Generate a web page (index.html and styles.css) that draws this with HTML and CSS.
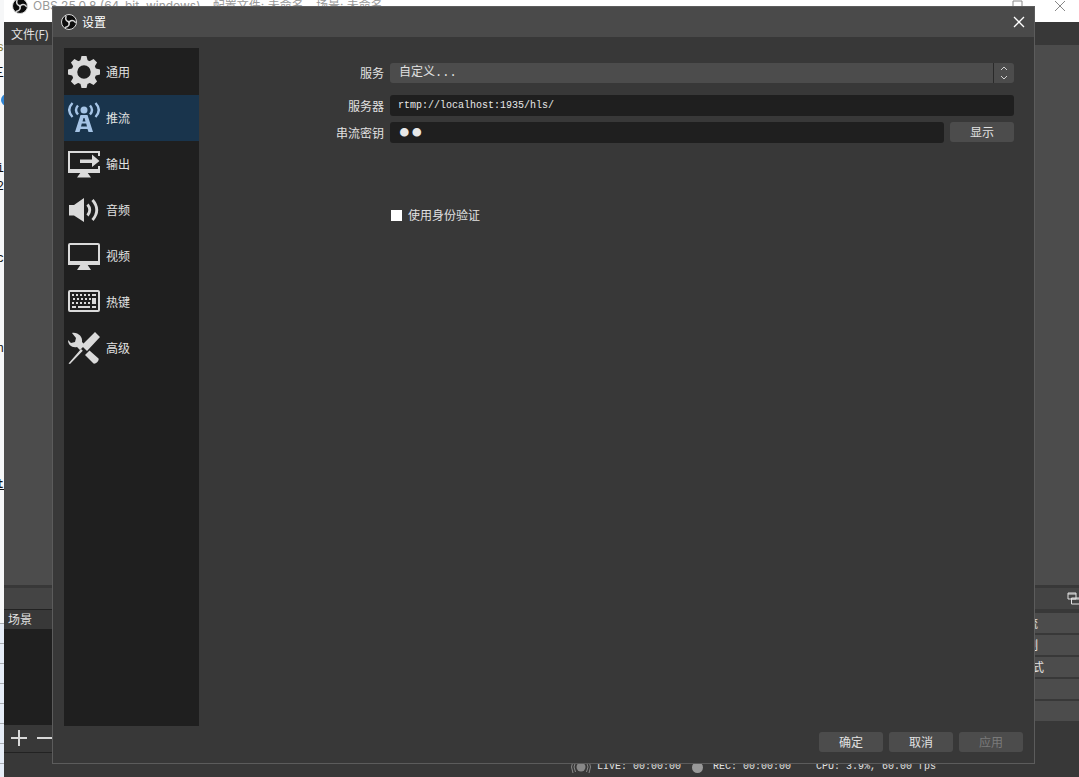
FILE: index.html
```html
<!DOCTYPE html>
<html lang="zh-CN">
<head>
<meta charset="utf-8">
<title>OBS 设置</title>
<link rel="stylesheet" href="styles.css">
</head>
<body>
<svg class="defs" aria-hidden="true">
  <symbol id="obs" viewBox="0 0 32 32">
    <circle cx="16" cy="16" r="15" fill="#0c0c0c" stroke="#d8d8d8" stroke-width="2"/>
    <g fill="none" stroke="#d8d8d8" stroke-width="3" stroke-linecap="round">
      <path d="M10 5c-2 6 1 10 7 11"/>
      <path d="M10 5c-2 6 1 10 7 11" transform="rotate(120 16 16)"/>
      <path d="M10 5c-2 6 1 10 7 11" transform="rotate(240 16 16)"/>
    </g>
  </symbol>
</svg>
<div class="desktop">
  <div class="editor-strip" aria-hidden="true">
    <span class="frag f-line">s</span>
    <span class="frag f-mark">三</span>
    <span class="frag f-dot"></span>
    <span class="frag f-i">i</span>
    <span class="frag f-2">2</span>
    <span class="frag f-c">c</span>
    <span class="frag f-n">n</span>
    <span class="frag f-t">t</span>
    <span class="editor-rows"></span>
  </div>
  <div class="window">
    <header class="window-title">
      <svg class="window-logo"><use href="#obs"/></svg>
      <span class="window-name">OBS 25.0.8 (64-bit, windows) - 配置文件: 未命名 - 场景: 未命名</span>
      <button class="win-btn" aria-label="最大化"><svg viewBox="0 0 12 12"><path d="M1 1h9v9H1z"/></svg></button>
      <button class="win-btn" aria-label="关闭窗口"><svg viewBox="0 0 12 12"><path d="M1 1l10 10M11 1L1 11"/></svg></button>
    </header>
    <nav class="menubar"><button class="menu">文件(F)</button></nav>
    <main class="preview"></main>
    <div class="docks">
      <section class="dock scenes">
        <div class="dock-head"></div>
        <h2 class="dock-title">场景</h2>
        <div class="dock-list"></div>
        <div class="dock-tools">
          <button aria-label="添加场景"><svg viewBox="0 0 16 16"><path d="M8 0v16M0 8h16"/></svg></button>
          <button aria-label="移除场景"><svg viewBox="0 0 16 16"><path d="M0 8h16"/></svg></button>
        </div>
      </section>
      <section class="dock controls">
        <div class="dock-head"><svg viewBox="0 0 12 13"><path d="M1 1h8v6H1zM4.500 6h9v6h-9z"/><path d="M1 2h8M4.500 7h9"/></svg></div>
        <div class="control-list">
          <button>开始推流</button>
          <button>开始录制</button>
          <button>工作室模式</button>
          <button aria-label="设置"></button>
          <button aria-label="退出"></button>
        </div>
      </section>
    </div>
    <footer class="status">
      <svg class="live" viewBox="0 0 20 14"><circle cx="10" cy="7" r="4.500"/><path d="M4.500 2q-3 5 0 10M15.500 2q3 5 0 10M2 1q-3 6 0 12M18 1q3 6 0 12"/></svg>
      <span class="live-text">LIVE: 00:00:00</span>
      <i class="rec"></i>
      <span class="rec-text">REC: 00:00:00</span>
      <span>CPU: 3.9%, 60.00 fps</span>
    </footer>
  </div>

  <div class="dialog" role="dialog" aria-labelledby="dlg-title">
    <header class="dialog-title">
      <svg class="dialog-logo"><use href="#obs"/></svg>
      <h1 id="dlg-title">设置</h1>
      <button class="dialog-close" aria-label="关闭"><svg viewBox="0 0 12 12"><path d="M1 1l10 10M11 1L1 11"/></svg></button>
    </header>
    <div class="dialog-body">
      <nav class="sidebar">
        <button class="item">
          <svg viewBox="0 0 32 32"><circle cx="16" cy="16" r="9.500" fill="none" stroke="currentColor" stroke-width="5.500"/>
            <g fill="currentColor"><path id="tooth" d="M12 6L13.500 0h5L20 6z"/><use href="#tooth" transform="rotate(45 16 16)"/><use href="#tooth" transform="rotate(90 16 16)"/><use href="#tooth" transform="rotate(135 16 16)"/><use href="#tooth" transform="rotate(180 16 16)"/><use href="#tooth" transform="rotate(225 16 16)"/><use href="#tooth" transform="rotate(270 16 16)"/><use href="#tooth" transform="rotate(315 16 16)"/></g></svg>
          <span>通用</span></button>
        <button class="item selected" aria-current="page">
          <svg viewBox="0 0 32 32"><circle cx="16" cy="8" r="3.500" fill="currentColor"/>
            <g fill="none" stroke="currentColor" stroke-width="2.400"><path d="M10 3.500q-4 4.500 0 9M22 3.500q4 4.500 0 9M4.500 1q-6.500 7 0 14M27.500 1q6.500 7 0 14"/></g>
            <path d="M12.500 13h7l5.500 17h-4.500l-1-3h-7l-1 3H7zM15.500 16l-1 3.500h3l-1-3.500zM13.800 21.500l-.8 3h6l-.8-3z" fill="currentColor" fill-rule="evenodd"/></svg>
          <span>推流</span></button>
        <button class="item">
          <svg viewBox="0 0 32 32"><path d="M31 8V4H1v19h30v-5" fill="none" stroke="currentColor" stroke-width="2"/><path d="M0 21h32v4H0zM13 24h6l4 5.500H9zM12 11.500h12V6.500l7.500 6.500-7.500 6v-4H12z" fill="currentColor"/></svg>
          <span>输出</span></button>
        <button class="item">
          <svg viewBox="0 0 32 32"><path d="M1 11h5l10-7v24L6 21.500H1z" fill="currentColor"/><path d="M19.500 10.500q4.500 5.500 0 11M24.500 6q8.500 10 0 20" fill="none" stroke="currentColor" stroke-width="2.800"/></svg>
          <span>音频</span></button>
        <button class="item">
          <svg viewBox="0 0 32 32"><rect x="1" y="4" width="30" height="19" rx="1" fill="none" stroke="currentColor" stroke-width="2"/><path d="M0 21h32v4H0zM13 24h6l4 6H9z" fill="currentColor"/></svg>
          <span>视频</span></button>
        <button class="item">
          <svg viewBox="0 0 32 32"><rect x="1" y="5" width="30" height="20" rx="1" fill="none" stroke="currentColor" stroke-width="2"/><g stroke="currentColor" stroke-width="2"><path d="M4 9h2M8 9h2M12 9h2M16 9h2M20 9h2M24 9h4M5 13h2M9 13h2M13 13h2M17 13h2M21 13h2M4 17h2M8 17h2M12 17h2M16 17h2M20 17h2"/><path d="M4 21h4M10 21h12M24 21h4"/><path d="M26 12v6" stroke-width="4"/></g></svg>
          <span>热键</span></button>
        <button class="item">
          <svg viewBox="0 0 32 32"><g fill="currentColor"><path d="M4 1l4 5-1 4-4 1-3-3c0 5 4 8 9 7l3 3 5-5-3-3c1-5-4-10-10-9z"/><path d="M17 23l4.500-4.500 9 8c1 2-3 6-5 5z"/><path d="M27 0l5 5-13 14-5.500-5.500zM13 17l1.800 1.800L2 32l-1.500-.5z"/></g></svg>
          <span>高级</span></button>
      </nav>
      <form class="form">
        <label for="service">服务</label>
        <div class="select-wrap">
          <select id="service"><option>自定义...</option></select>
          <svg viewBox="0 0 8 14"><path d="M1 4l3-3 3 3M1 10l3 3 3-3"/></svg>
        </div>
        <label for="server">服务器</label>
        <input class="field" id="server" type="text" value="rtmp://localhost:1935/hls/">
        <label for="key">串流密钥</label>
        <div class="key-row">
          <input class="field key" id="key" type="password" value="ab">
          <button type="button" class="btn">显示</button>
        </div>
        <label class="check"><input type="checkbox"><span>使用身份验证</span></label>
      </form>
    </div>
    <footer class="dialog-actions">
      <button class="btn">确定</button>
      <button class="btn">取消</button>
      <button class="btn" disabled>应用</button>
    </footer>
  </div>
</div>
</body>
</html>
```
FILE: styles.css
```css
* { box-sizing: border-box; }
body {
  margin: 0;
  font: 12px/16px "Noto Sans CJK SC", "Open Sans", sans-serif;
  color: #e1e1e1;
}
button { font: inherit; color: inherit; border: 0; padding: 0; background: none; }
h1, h2 { margin: 0; font: inherit; }
svg { display: block; flex: none; }
.defs { position: absolute; width: 0; height: 0; }

.desktop { position: relative; display: flex; height: 100vh; overflow: hidden; background: #fff; }

/* sliver of the editor behind the window */
.editor-strip {
  flex: none;
  width: 4px;
  overflow: hidden;
  display: flex;
  flex-direction: column;
  align-items: flex-end;
  background: #f6f7f8;
  color: #111;
  font: 12px/16px "Liberation Mono", "Noto Sans CJK SC", monospace;
}
.frag { flex: none; height: 16px; }
.f-line { margin-top: 40px; color: #8a7a30; }
.f-mark { margin-top: 10px; }
.f-dot { margin-top: 12px; width: 12px; height: 12px; margin-right: -9px; border-radius: 6px; background: #2f86d6; }
.f-i { margin-top: 55px; }
.f-2 { margin-top: 2px; }
.f-c { margin-top: 56px; }
.f-n { margin-top: 74px; }
.f-t { margin-top: 120px; font-weight: bold; text-decoration: underline; }
.editor-rows {
  flex: 1;
  width: 100%;
  margin-top: 130px;
  background: repeating-linear-gradient(#a9adb3 0 1px, #e6edf7 1px 20px);
}

.window { flex: 1; min-width: 0; display: flex; flex-direction: column; background: #383838; }
.window-title {
  flex: none;
  height: 22px;
  display: flex;
  align-items: flex-start;
  padding-left: 8px;
  background: #fff;
  color: #999;
}
.window-logo { width: 16px; height: 16px; margin-top: -2px; margin-right: 5px; }
.window-name { flex: 1; margin-top: -2px; white-space: nowrap; font-family: Inter, "Noto Sans CJK SC", sans-serif; }
.win-btn { width: 46px; display: flex; justify-content: center; }
.win-btn svg { width: 12px; height: 12px; fill: none; stroke: #888; }
.win-btn:last-child { width: 38px; }
.menubar { flex: none; height: 23px; padding: 4px 7px; }
.menu { font-family: "Open Sans", "Noto Sans CJK SC", sans-serif; }
.preview { flex: 1; background: #4c4c4c; }

.docks { flex: none; display: flex; justify-content: space-between; margin-top: 3px; }
.dock { width: 150px; display: flex; flex-direction: column; }
.dock-head { height: 21px; background: #444; display: flex; justify-content: flex-end; align-items: center; }
.dock-head svg { width: 12px; height: 13px; fill: none; stroke: #e1e1e1; }
.dock-title { height: 20px; padding: 1px 4px; border-top: 1px solid #222; }
.dock-list { height: 96px; background: #1f1f1f; }
.dock-tools { height: 28px; border-bottom: 1px solid #222; display: flex; align-items: center; gap: 10px; padding: 0 0 2px 7px; }
.dock-tools svg { width: 16px; height: 16px; fill: none; stroke: #d8d8d8; stroke-width: 2; }
.control-list { display: flex; flex-direction: column; gap: 2px; padding-top: 4px; }
.controls { width: 160px; }
.control-list button { height: 20px; background: #4c4c4c; padding-left: 30px; }

.status {
  flex: none;
  height: 24px;
  display: flex;
  align-items: center;
  padding-left: 567px;
  padding-top: 4px;
  font: 10px/16px "Liberation Mono", monospace;
  white-space: nowrap;
}
.live { width: 20px; height: 14px; fill: #888; margin-right: 6px; }
.live path { fill: none; stroke: #888; }
.live-text { margin-right: 11px; }
.rec { width: 11px; height: 11px; border-radius: 50%; background: #999; margin-right: 10px; }
.rec-text { margin-right: 25px; }

.dialog {
  position: absolute;
  top: 6px;
  right: 44px;
  bottom: 13px;
  left: 52px;
  display: flex;
  flex-direction: column;
  background: #383838;
  border: 1px solid #5c5c5c;
}
.dialog-title { flex: none; height: 30px; display: flex; align-items: center; padding: 0 9px 0 8px; background: #4a4a4a; }
.dialog-logo { width: 16px; height: 16px; margin-right: 5px; }
.dialog-title h1 { flex: 1; color: #fff; }
.dialog-close svg { width: 12px; height: 12px; fill: none; stroke: #fff; stroke-width: 1.300; }

.dialog-body { flex: 1; display: flex; padding: 11px 11px 0; }
.sidebar { flex: none; width: 135px; padding-top: 1px; background: #1f1f1f; }
.item { width: 100%; height: 46px; display: flex; align-items: center; gap: 6px; padding-left: 4px; color: #dadada; }
.item svg { width: 32px; height: 32px; }
.item span { color: #e1e1e1; }
.selected { background: #19344c; color: #a5c4e6; }

.form {
  flex: 1;
  display: grid;
  grid-template-columns: 185px minmax(0, 1fr);
  align-content: start;
  align-items: center;
  column-gap: 6px;
  row-gap: 6px;
  padding: 15px 9px 0 0;
}
.form > label { text-align: right; }
.select-wrap { position: relative; margin-bottom: 6px; }
.form > label:first-child { margin-bottom: 6px; }
.select-wrap select {
  appearance: none;
  display: block;
  width: 100%;
  height: 20px;
  padding: 0 9px;
  border: 0;
  border-radius: 3px;
  background: linear-gradient(90deg, #2a2a2a, #2a2a2a) right 20px top / 1px 100% no-repeat #4c4c4c;
  color: inherit;
  font: 12px/20px "Liberation Mono", "Noto Sans CJK SC", monospace;
}
.select-wrap svg { position: absolute; top: 3px; right: 6px; width: 8px; height: 14px; fill: none; stroke: #d0d0d0; }
.field {
  width: 100%;
  height: 21px;
  padding: 0 8px;
  border: 0;
  border-radius: 3px;
  background: #1f1f1f;
  color: #e8e8e8;
  font: 10px/20px "Liberation Mono", monospace;
}
.key-row { display: flex; align-items: flex-start; gap: 6px; }
.key { flex: 1; min-width: 0; font: 36px/20px "Liberation Serif", serif; }
.btn { flex: none; width: 64px; height: 20px; border-radius: 3px; background: #4c4c4c; }
.btn:disabled { color: #7a7a7a; }
.form > .check { grid-column: 2; justify-self: start; display: flex; align-items: center; gap: 6px; margin-top: 58px; }
.check input { appearance: none; width: 11px; height: 11px; margin: 0 0 0 1px; background: #fff; }
.dialog-actions { flex: none; display: flex; justify-content: flex-end; gap: 6px; padding: 6px 11px 11px; }
```
